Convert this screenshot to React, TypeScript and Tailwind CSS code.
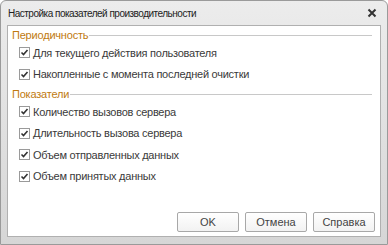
import React from "react";

const periodItems = ["Для текущего действия пользователя", "Накопленные с момента последней очистки"];
const metricItems = [
  "Количество вызовов сервера",
  "Длительность вызова сервера",
  "Объем отправленных данных",
  "Объем принятых данных",
];

function Check({ label }: { label: string }) {
  return (
    <label className="flex h-[21.5px] items-center gap-[3px] pl-[7px]">
      <span className="flex h-[11px] w-[11px] items-center justify-center border border-[#9a9a9a] bg-white">
        <svg width="9" height="9" viewBox="0 0 9 9">
          <path d="M1.5 4.5 L3.5 6.5 L7.5 2" fill="none" stroke="#333" strokeWidth="1.6" />
        </svg>
      </span>
      <span className="text-[11px] tracking-[-0.25px] text-[#3a3a3a]">{label}</span>
    </label>
  );
}

function Group({ title, children }: { title: string; children: React.ReactNode }) {
  return (
    <div>
      <div className="flex h-[14px] items-center gap-[1px] pr-[8px]">
        <span className="text-[11px] tracking-[-0.2px] text-[#c07a10]">{title}</span>
        <div className="h-px flex-1 bg-[#c8c8c8]" />
      </div>
      <div>{children}</div>
    </div>
  );
}

function Btn({ label }: { label: string }) {
  return (
    <button className="h-[20px] w-[62px] rounded-[2px] border border-[#a8a8a8] bg-gradient-to-b from-white to-[#f2f2f2] text-[11px] text-[#444]">
      {label}
    </button>
  );
}

export default function App() {
  return (
    <div className="h-[245px] w-[388px] bg-white font-['Liberation_Sans',Arial,sans-serif]">
      <div className="flex h-full flex-col rounded-t-[6px] border border-[#9a9a9a] bg-gradient-to-b from-[#ececec] to-[#d6d6d6]">
        <div className="flex h-[24px] items-center justify-between pl-[7px] pr-[10px]">
          <span className="text-[10px] tracking-[-0.5px] text-[#222]">Настройка показателей производительности</span>
          <svg width="10" height="10" viewBox="0 0 10 10">
            <path d="M1.5 1.5 L8.5 8.5 M8.5 1.5 L1.5 8.5" stroke="#333" strokeWidth="2" />
          </svg>
        </div>
        <div className="mx-[6px] mb-[7px] flex flex-1 flex-col border border-[#b0b0b0] bg-white pl-[4px] pt-[2px]">
          <Group title="Периодичность">
            {periodItems.map((t) => (
              <Check key={t} label={t} />
            ))}
          </Group>
          <div className="mt-[2px]">
            <Group title="Показатели">
              {metricItems.map((t) => (
                <Check key={t} label={t} />
              ))}
            </Group>
          </div>
          <div className="mt-auto mb-[4px] flex justify-end gap-[6px] pr-[5px]">
            <Btn label="OK" />
            <Btn label="Отмена" />
            <Btn label="Справка" />
          </div>
        </div>
      </div>
    </div>
  );
}
